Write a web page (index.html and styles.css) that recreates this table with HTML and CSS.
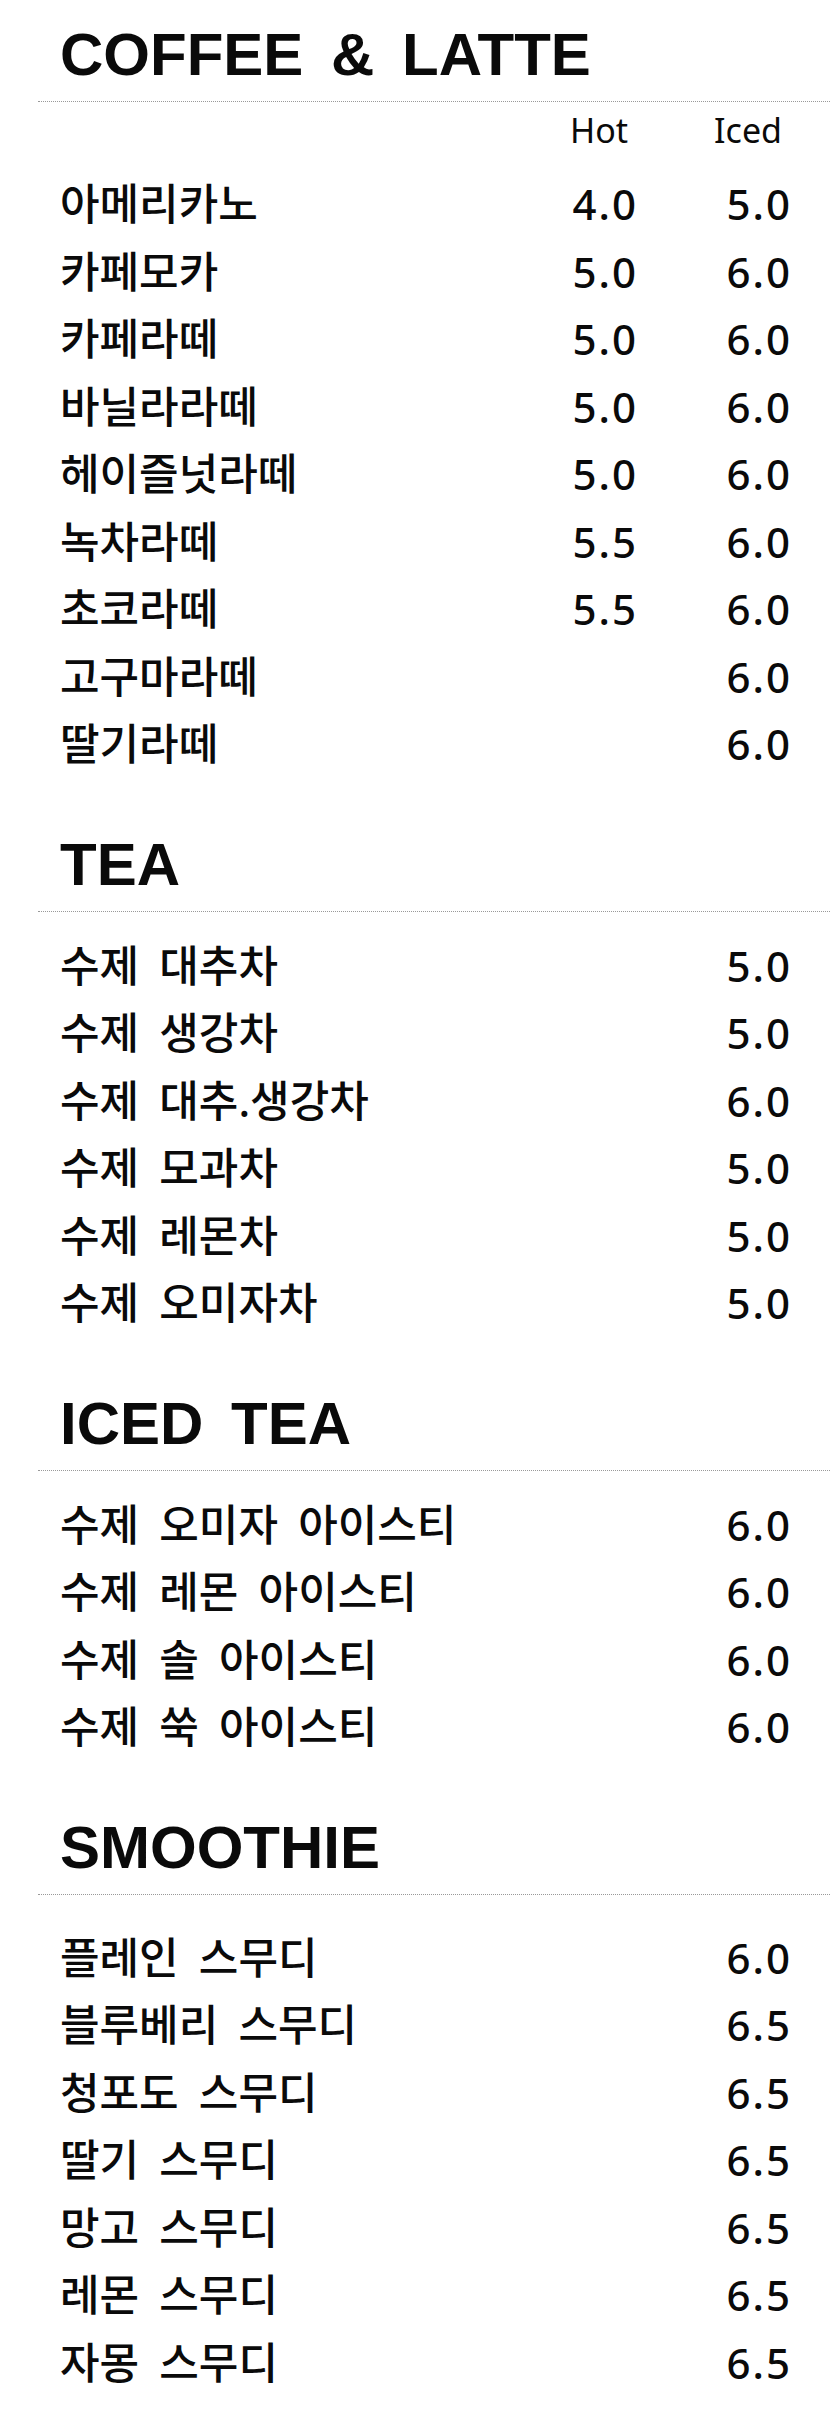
FILE: index.html
```html
<!DOCTYPE html>
<html lang="ko">
<head>
  <meta charset="UTF-8">
  <meta name="viewport" content="width=device-width, initial-scale=1.0">
  <title>Menu</title>
  <link rel="stylesheet" href="styles.css">
</head>
<body>
  <div id="menu">

    <section class="section">
      <h2 class="section-title">COFFEE &amp; LATTE</h2>
      <div class="row row-head">
        <span class="name"></span>
        <span class="price">Hot</span>
        <span class="price">Iced</span>
      </div>
      <div class="items first">
        <div class="row"><span class="name">아메리카노</span><span class="price">4.0</span><span class="price">5.0</span></div>
        <div class="row"><span class="name">카페모카</span><span class="price">5.0</span><span class="price">6.0</span></div>
        <div class="row"><span class="name">카페라떼</span><span class="price">5.0</span><span class="price">6.0</span></div>
        <div class="row"><span class="name">바닐라라떼</span><span class="price">5.0</span><span class="price">6.0</span></div>
        <div class="row"><span class="name">헤이즐넛라떼</span><span class="price">5.0</span><span class="price">6.0</span></div>
        <div class="row"><span class="name">녹차라떼</span><span class="price">5.5</span><span class="price">6.0</span></div>
        <div class="row"><span class="name">초코라떼</span><span class="price">5.5</span><span class="price">6.0</span></div>
        <div class="row"><span class="name">고구마라떼</span><span class="price"></span><span class="price">6.0</span></div>
        <div class="row"><span class="name">딸기라떼</span><span class="price"></span><span class="price">6.0</span></div>
      </div>
    </section>

    <section class="section">
      <h2 class="section-title">TEA</h2>
      <div class="items">
        <div class="row"><span class="name">수제 대추차</span><span class="price"></span><span class="price">5.0</span></div>
        <div class="row"><span class="name">수제 생강차</span><span class="price"></span><span class="price">5.0</span></div>
        <div class="row"><span class="name">수제 대추.생강차</span><span class="price"></span><span class="price">6.0</span></div>
        <div class="row"><span class="name">수제 모과차</span><span class="price"></span><span class="price">5.0</span></div>
        <div class="row"><span class="name">수제 레몬차</span><span class="price"></span><span class="price">5.0</span></div>
        <div class="row"><span class="name">수제 오미자차</span><span class="price"></span><span class="price">5.0</span></div>
      </div>
    </section>

    <section class="section">
      <h2 class="section-title">ICED TEA</h2>
      <div class="items">
        <div class="row"><span class="name">수제 오미자 아이스티</span><span class="price"></span><span class="price">6.0</span></div>
        <div class="row"><span class="name">수제 레몬 아이스티</span><span class="price"></span><span class="price">6.0</span></div>
        <div class="row"><span class="name">수제 솔 아이스티</span><span class="price"></span><span class="price">6.0</span></div>
        <div class="row"><span class="name">수제 쑥 아이스티</span><span class="price"></span><span class="price">6.0</span></div>
      </div>
    </section>

    <section class="section">
      <h2 class="section-title">SMOOTHIE</h2>
      <div class="items">
        <div class="row"><span class="name">플레인 스무디</span><span class="price"></span><span class="price">6.0</span></div>
        <div class="row"><span class="name">블루베리 스무디</span><span class="price"></span><span class="price">6.5</span></div>
        <div class="row"><span class="name">청포도 스무디</span><span class="price"></span><span class="price">6.5</span></div>
        <div class="row"><span class="name">딸기 스무디</span><span class="price"></span><span class="price">6.5</span></div>
        <div class="row"><span class="name">망고 스무디</span><span class="price"></span><span class="price">6.5</span></div>
        <div class="row"><span class="name">레몬 스무디</span><span class="price"></span><span class="price">6.5</span></div>
        <div class="row"><span class="name">자몽 스무디</span><span class="price"></span><span class="price">6.5</span></div>
      </div>
    </section>

  </div>
</body>
</html>
```

FILE: styles.css
```css
body {
  margin: 0;
  background: #fff;
  color: #0a0a0a;
  font-family: 'Noto Sans', 'Noto Sans CJK KR', sans-serif;
}

#menu {
  padding: 25px 0 0 38px;
}

.section {
  margin-bottom: 57px;
}

.section-title {
  margin: 0;
  padding: 0 0 16px 22px;
  font-family: 'Liberation Sans', Arial, sans-serif;
  font-size: 60px;
  font-weight: bold;
  line-height: 60px;
  word-spacing: 11px;
  border-bottom: 1px dotted #999;
}

.items {
  padding-top: 20px;
}

.items.first {
  padding-top: 0;
}

.section:last-child .items {
  padding-top: 29px;
}

.row {
  display: grid;
  grid-template-columns: 1fr 154px 154px;
  padding: 0 38px 0 22px;
  height: 67.5px;
  align-items: center;
}

.name {
  font-size: 43px;
  font-weight: 500;
  line-height: 67px;
  word-spacing: 9px;
}

.price {
  text-align: right;
  font-size: 42px;
  font-weight: 500;
  line-height: 67px;
  letter-spacing: 2px;
}

.row-head {
  height: 56px;
  margin-bottom: 12px;
}

.row-head .price {
  font-size: 34px;
  font-weight: 400;
  line-height: 56px;
  letter-spacing: 0;
  padding-right: 10px;
}
```
